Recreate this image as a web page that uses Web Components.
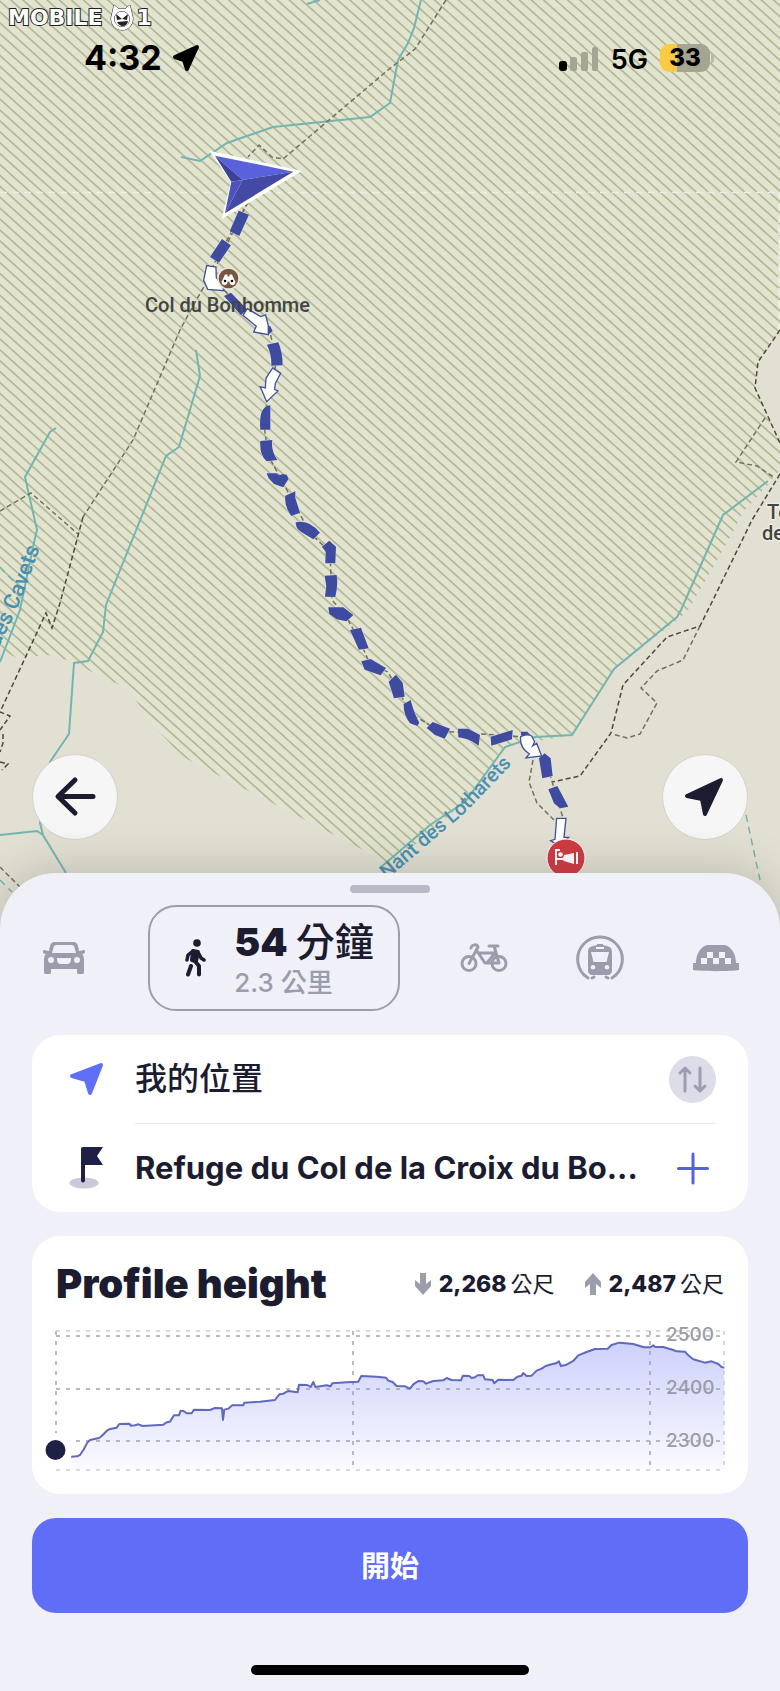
<!DOCTYPE html>
<html lang="zh-Hant">
<head>
<meta charset="utf-8">
<meta name="viewport" content="width=device-width, initial-scale=1">
<title>Route</title>
<style>
  body {
    margin: 0;
    font-family: Inter, "Noto Sans CJK TC", sans-serif;
    color: #1c1c30;
    background: #f0f0f9;
  }
</style>
</head>
<body>
<route-screen>
  <map-view slot="map"></map-view>
  <site-mark slot="mark"></site-mark>
  <status-bar slot="status" time="4:32" network="5G" battery="33"></status-bar>
  <round-button slot="controls" label="返回">
    <svg width="42" height="42" viewBox="0 0 42 42" fill="none" stroke="#1c1c30" stroke-width="5" stroke-linecap="round" stroke-linejoin="round"><path d="M21 4 4 20.500 21 37M5 20.500h34"/></svg>
  </round-button>
  <round-button slot="controls" label="定位">
    <svg width="42" height="42" viewBox="0 0 42 42" fill="#1c1c30" stroke="#1c1c30" stroke-width="4" stroke-linejoin="round"><path d="M37 4 21 38 18 23 3 20Z"/></svg>
  </round-button>

  <bottom-sheet slot="sheet">
    <mode-picker>
      <travel-mode label="開車">
        <svg width="44" height="34" viewBox="0 0 44 34" fill="currentColor"><path fill-rule="evenodd" d="M13 1h18c3 0 4 1 5 4l1 5 5-1c2 0 1 4-1 4h-1c2 2 2 4 2 7v11c0 2-1 2-2 2h-3c-2 0-2-1-2-2v-3H9v3c0 2-1 2-2 2H4c-1 0-2 0-2-2V20c0-3 0-5 2-7H3c-2 0-3-4-1-4l5 1 1-5c1-3 2-4 5-4Zm1 3-2 1-2 7h24l-2-7-2-1ZM9 16a3 3 0 1 0 0 6 3 3 0 0 0 0-6Zm26 0a3 3 0 1 0 0 6 3 3 0 0 0 0-6Zm-20 1c0 4 1 6 4 6h6c3 0 4-2 4-6Z"/></svg>
      </travel-mode>
      <travel-mode label="步行" selected>
        <svg width="22" height="38" viewBox="0 0 22 38" fill="none" stroke="currentColor" stroke-width="4" stroke-linecap="round" stroke-linejoin="round"><circle cx="13" cy="4" r="3.800" fill="currentColor" stroke="none"/><path d="m9 12-5 4-1 5M15 15l2 4 3 2" stroke-width="3.500"/><path d="m9 12 5 1-2 9-4-1Z" fill="currentColor"/><path d="m10 21 5 6 0 8.500M7 27 4 35.500"/></svg>
        <span slot="value">54</span>
        <span slot="unit">分鐘</span>
        <span slot="distance">2.3 公里</span>
      </travel-mode>
      <travel-mode label="單車">
        <svg width="48" height="30" viewBox="0 0 48 30" fill="none" stroke="currentColor" stroke-width="3" stroke-linecap="round" stroke-linejoin="round"><circle cx="9" cy="20.500" r="7"/><circle cx="39" cy="20.500" r="7"/><path d="M9 20.500 18 4c-1-3-6-3-7 1M18 10h17l-8 10h12L34 3M29 3h9M17 8l8 12h3"/></svg>
      </travel-mode>
      <travel-mode label="大眾運輸">
        <svg width="48" height="46" viewBox="0 0 48 46" fill="none" stroke="currentColor" stroke-width="3" stroke-linecap="round"><path d="M12 43a22.300 22.300 0 1 1 24 0"/><path fill="currentColor" fill-rule="evenodd" stroke="none" d="m17 11 4-1v-1h6v1l4 1c4 1 5 3 5 6v18c0 4-2 5-5 5H17c-3 0-5-1-5-5V17c0-3 1-5 5-6Zm-2 6 2 8c0 2 1 2 2 2h10c1 0 2 0 2-2l2-8Zm5-5v2h8v-2Zm-3 18a2.300 2.300 0 1 0 0 4.600 2.300 2.300 0 0 0 0-4.600Zm14 0a2.300 2.300 0 1 0 0 4.600 2.300 2.300 0 0 0 0-4.600Z"/><path d="m18 42-2 1m14-1 2 1"/></svg>
      </travel-mode>
      <travel-mode label="計程車">
        <svg width="48" height="28" viewBox="0 0 48 28" fill="currentColor"><path d="M4 19c0-8 4-16 11-18h18c7 2 11 10 11 18h3v7c-8 1.500-38 1.500-46 0v-7Z"/><path fill="#f0f0f9" d="M15 8h6v6h-6Zm12 0h6v6h-6ZM9 14h6v6H9Zm12 0h6v6h-6Zm12 0h6v6h-6Z"/></svg>
      </travel-mode>
    </mode-picker>

    <sheet-card>
      <place-row label="交換起點和終點">
        <svg slot="icon" width="36" height="36" viewBox="0 0 36 36" fill="#6070f6" stroke="#6070f6" stroke-width="4" stroke-linejoin="round"><path d="M32 4 21 32 17 19 3 15Z"/></svg>
        <span class="zh">我的位置</span>
        <svg slot="action" width="47" height="47" viewBox="0 0 47 47" fill="none" stroke="#9c9eae" stroke-width="3" stroke-linecap="round" stroke-linejoin="round"><circle cx="23.500" cy="23.500" r="23.500" fill="#dddce9" stroke="none"/><path d="M16 35V12m-5 5 5-5 5 5M31 12v23m-5-5 5 5 5-5"/></svg>
      </place-row>
      <place-row label="新增停靠點" divided>
        <svg slot="icon" width="36" height="42" viewBox="0 0 36 42"><ellipse cx="15" cy="36" rx="14.500" ry="5.500" fill="#c9c9d8"/><path fill="#1f2045" d="M12 2q0-2 2-2h20l-6 9 6 9H16v16q-2 3-4 0Z"/></svg>
        <span>Refuge du Col de la Croix du Bo...</span>
        <svg slot="action" width="47" height="47" viewBox="0 0 47 47" fill="none" stroke="#5863d3" stroke-width="3" stroke-linecap="round"><path d="M24 9v29M9.500 23.500h29"/></svg>
      </place-row>
    </sheet-card>

    <sheet-card>
      <height-profile low="2,268" high="2,487" unit="公尺">Profile height</height-profile>
    </sheet-card>

    <start-button>開始</start-button>
  </bottom-sheet>
</route-screen>

<script>
class RouteScreen extends HTMLElement {
  constructor () {
    super()
    this.shadow = this.attachShadow({ mode: 'open' })
  }

  connectedCallback () {
    this.shadow.innerHTML =
    /* html */ `
      <style>
        :host {
          display: flex;
          flex-direction: column;
          min-height: 100vh;
          overflow: hidden;
        }

        .stage {
          position: relative;
          display: flex;
          flex: 1;
          flex-direction: column;
          justify-content: space-between;
          min-height: 480px;
        }

        /* the map runs on under the rounded corners of the sheet */
        ::slotted([slot="map"]) {
          position: absolute;
          inset: 0 0 -57px;
        }

        ::slotted([slot="mark"]) {
          position: absolute;
          top: 4px;
          left: 8px;
        }

        ::slotted([slot="status"]) {
          position: relative;
        }

        .controls {
          position: relative;
          display: flex;
          justify-content: space-between;
          padding: 0 32px 33px;
        }
      </style>
      <div class="stage">
        <slot name="map"></slot>
        <slot name="mark"></slot>
        <slot name="status"></slot>
        <div class="controls"><slot name="controls"></slot></div>
      </div>
      <slot name="sheet"></slot>
    `
  }
}

class SiteMark extends HTMLElement {
  constructor () {
    super()
    this.shadow = this.attachShadow({ mode: 'open' })
  }

  connectedCallback () {
    this.shadow.innerHTML =
    /* html */ `
      <style>
        :host {
          display: flex;
          align-items: center;
          gap: 2px;
          height: 27px;
          font: bold 22px/27px "DejaVu Sans", sans-serif;
          color: #fff;
          -webkit-text-stroke: 2px #222;
          paint-order: stroke fill;
        }

        svg {
          margin-left: 4px;
        }
      </style>
      <span>MOBILE</span>
      <svg width="26" height="27" viewBox="0 0 26 27" fill="#fff" stroke="#222" stroke-linejoin="round">
        <path d="M5 1l5 4h6l5-4 2 9c3 8-2 16-10 16S0 18 3 10Z"/>
        <circle cx="13" cy="15" r="7.500"/>
        <path fill="#222" stroke="none" d="m7 10 6 5-5 1Zm12 0-6 5 5 1ZM8 18l11-1c-1 6-8 7-11 1Z"/>
      </svg>
      <span>1</span>
    `
  }
}

class StatusBar extends HTMLElement {
  constructor () {
    super()
    this.shadow = this.attachShadow({ mode: 'open' })
  }

  connectedCallback () {
    this.shadow.innerHTML =
    /* html */ `
      <style>
        :host {
          display: flex;
          justify-content: space-between;
          align-items: center;
          padding: 36px 66px 0 84px;
          color: #000;
        }

        div {
          display: flex;
          align-items: center;
        }

        .time {
          gap: 10px;
          font-size: 34px;
          font-weight: 700;
          line-height: 40px;
        }

        .radio {
          gap: 12px;
          font-size: 27px;
          font-weight: 600;
          line-height: 40px;
        }

        .network {
          padding-top: 4px;
        }

        .battery {
          justify-content: center;
          width: 50px;
          height: 28px;
          border-radius: 9px;
          background: linear-gradient(90deg, #f9cb44 34%, #a5a592 34%);
          font-size: 24px;
          font-weight: 800;
          line-height: 28px;
        }

        .cell {
          gap: 1px;
        }

        .cell::after {
          content: "";
          width: 3px;
          height: 9px;
          border-radius: 0 3px 3px 0;
          background: #b9b9a4;
        }
      </style>
      <div class="time">
        <span>${this.getAttribute('time')}</span>
        <svg width="28" height="28" viewBox="0 0 28 28" stroke="#000" stroke-width="4" stroke-linejoin="round"><path d="M25 3 15 25 12 16 3 13Z"/></svg>
      </div>
      <div class="radio">
        <svg width="40" height="25" viewBox="0 0 40 25" fill="#a5a593"><rect y="15" width="8" height="10" rx="3" fill="#000"/><rect x="11" y="11" width="7" height="14" rx="2"/><rect x="22" y="6" width="7" height="19" rx="2"/><rect x="33" y="1" width="6" height="24" rx="2"/></svg>
        <span class="network">${this.getAttribute('network')}</span>
        <div class="cell"><div class="battery">${this.getAttribute('battery')}</div></div>
      </div>
    `
  }
}

class MapView extends HTMLElement {
  constructor () {
    super()
    this.shadow = this.attachShadow({ mode: 'open' })
  }

  connectedCallback () {
    this.shadow.innerHTML =
    /* html */ `
      <style>
        :host {
          display: block;
        }

        svg {
          display: block;
          width: 100%;
          height: 100%;
          background: #e2e0d3;
        }

        text {
          font-family: Roboto, sans-serif;
          font-size: 20px;
          font-weight: 500;
          fill: #444443;
        }

        .halo {
          stroke: #ecebdf;
          stroke-width: 3px;
          paint-order: stroke;
        }

        .river-name {
          fill: #4990b0;
          text-anchor: end;
        }

        .large {
          font-size: 22px;
        }

        .water {
          fill: none;
          stroke: #74b5b0;
          stroke-width: 2;
        }

        .trail {
          fill: none;
          stroke: #75705a;
          stroke-width: 1.5;
          stroke-dasharray: 5 3;
        }

        .dark {
          stroke: #4f4937;
        }

        .route {
          fill: #3e4b9f;
          stroke: #dfe2e4;
          stroke-width: 3;
          paint-order: stroke;
        }

        .turn {
          fill: #fff;
          stroke: #41539c;
          stroke-width: 4;
        }
      </style>
      <svg viewBox="0 0 780 930" preserveAspectRatio="xMidYMax slice">
        <defs>
          <pattern id="hatch" width="40" height="8.100" patternUnits="userSpaceOnUse" patternTransform="rotate(42)">
            <rect width="40" height="8.100" fill="#e2e4d1"/>
            <rect width="40" height="1.600" fill="#b0b68c"/>
          </pattern>
          <path id="cavets" d="M-32 722 2 640 16 612 24 592 40 548"/>
          <path id="lotharets" d="M368 896 426 846 466 812 512 764"/>
        </defs>

        <path fill="url(#hatch)" d="M0 0H780V330L758 362 755 388 780 443V470L763 490 743 512 727 543 687 612 677 620 614 669 572 735 505 747 465 802 390 866 375 856 183 757 148 720 130 690 88 670 67 660 48 655 17 658 0 650Z"/>
        <path d="M0 192.500H780M779 192V330" fill="none" stroke="#eeefe4" stroke-width="1.500" stroke-dasharray="7 5"/>

        <g class="water">
          <path d="M181 157 200 161 227 143 273 127 370 117 390 103 398 60 408 43 414 28 421 0M307 4l13-4"/>
          <path d="M196 350 200 376 179 447 166 456 106 605 103 632 88 661 74 663 69 734 50 762 40 823 43 835 66 873M0 835 37 831 43 835"/>
          <path d="M56 428 50 432 25 477 37 530 33 547 20 610 0 662"/>
          <path d="M768 481 723 515 681 610 677 617 614 669 572 735 535 737 505 747 465 802 430 825 380 868"/>
          <path d="M0 567 20 588M746 815 760 880M0 880 12 892" stroke-dasharray="7 5" stroke-width="1.500"/>
        </g>

        <g class="trail">
          <path d="M446 0 415 49 388 70 283 159 272 157 259 145 248 157"/>
          <path d="M248 202 216 266 198 297 180 330 133 440 83 517"/>
          <path d="M0 511 31 493 78 534M0 867 20 887"/>
          <path d="M765 418 736 462 757 466 775 478M700 626 683 660 657 671 641 688 657 703 640 734 627 738 612 734M533 760 529 782 537 803 554 820"/>
        </g>
        <g class="trail dark">
          <path d="M83 517 60 603 52 628 46 613 0 712 10 716 0 730M3 734 3 743 0 752M0 762 8 764 2 770"/>
          <path d="M780 330 758 362 755 388 780 443M780 474 752 520 712 602 700 626 667 637 623 685 611 733 580 776 552 782"/>
        </g>
        <path class="trail" d="M248 202 215 262 210 272 242 312 270 333 277 360 267 400 264 425 268 455 288 492 310 533 330 552 332 600 345 615 359 639 370 664 388 672 398 690 411 714 440 731 525 737 548 768 563 818"/>

        <!-- walked line, drawn as separate dashes -->
        <g transform="scale(.3333)">
          <path class="route" d="m716 632 31 12-29 64-29-14ZM666 717l27 19-36 52-27-17ZM672 888l21-10 48 50-18 18ZM790 985l20-8 8 16-14 12Z"/>
          <path class="turn" d="m620 797 28 4 1 32 12 16 12 23-50-4-12-27ZM742 926l40 24 15-5 8 32 0 27-44-8 8-17-40-33Z"/>
        </g>
        <g transform="translate(0 330) scale(.3333)">
          <path class="route" d="m801 44 34-7q13 30 13 69l-34 1q2-30-13-63ZM781 299q-6-70 30-73v73ZM781 333l36-3q-5 30 15 60l-32 4q-22-20-19-61ZM800 430h30l8 6 10-4 12 2 6 12-16 26-28-10-16-17ZM856 497l30-13 0 20 14 44-26 10q-22-30-18-61ZM887 577q40-10 73 31l-20 20-35-21q-18-10-18-30ZM966 650l22-18 20 18-2 50h-30l1-35ZM974 737l36-2q5 30-4 66l-31-1 4-32Z"/>
          <path class="turn" d="m818 114 24 16-16 30-2 18 10 5-34 32-19-45 15 4 2-29Z"/>
        </g>
        <g transform="translate(0 600) scale(.3333)">
          <path class="route" d="m985 22 45 0 30 23-20 19-30-6-22-16ZM1050 90l33-7 23 62-29 4ZM1084 184l28-7 46 27-16 22-48-17Z"/>
        </g>
        <g transform="translate(390 600) scale(.3333)">
          <path class="route" d="m-4 245 22-21 20 24 6 42-32 5ZM41 312l21-12q10 40 26 68l-6 10-22-8q-20-25-19-58ZM110 384l18-18 52 20-16 30-29-11ZM204 386h31l35 19-4 32q-30-22-61-25ZM302 410l66-20-2 28-62 19ZM392 395h20l16 17-33 0ZM447 475l17-15 18 15 6 53-31 7ZM475 568l27-10 33 62-25 5-18-15Z"/>
          <path class="turn" d="M392 410q18-10 33-2l9 17-6 13 12-8 15 38-47 6 10-12q-30-20-26-52ZM500 655h28l-6 57 14 0-26 28-28-18 13-4Z"/>
        </g>

        <g transform="scale(.3333)">
          <path fill="#fff" d="M628 452 905 513 665 658 692 545Z"/>
          <path fill="#5961dc" d="M645 467 880 515 728 540Z"/>
          <path fill="#4449a5" d="M880 515 675 640 728 540Z"/>
          <path fill="#3c4199" d="M645 467 728 540 694 545Z"/>
          <path fill="#4d53bd" d="M694 545 728 540 675 640Z"/>
        </g>

        <circle cx="228.500" cy="278.500" r="10.500" fill="#775641" stroke="#e9e6d8" stroke-width="1.500"/>
        <path fill="#fff" d="M222.500 280 225 274.500h2.500v2h2v-2h2.500l2.500 5.500a3 3 0 1 1-5 1.500h-2a3 3 0 1 1-5-1.500Z"/>
        <circle cx="225" cy="281" r="1.300"/>
        <circle cx="232" cy="281" r="1.300"/>

        <g transform="translate(566 858)">
          <circle r="19" fill="#d03a42" stroke="#fff"/>
          <path fill="#fff" d="M-11-9h5v2h-3V0h6l1-3 10-2v11l-10-3-1-1h-6v5h-2ZM10-6h2v12h-2Z"/>
          <circle cx="-5.500" cy="-3.500" r="2.300" fill="#fff"/>
        </g>

        <text x="145" y="312">Col du Bonhomme</text>
        <text class="halo" x="767" y="519">Te</text>
        <text class="halo" x="762" y="540">de</text>
        <text class="river-name large"><textPath href="#cavets" startOffset="100%">au des Cavets</textPath></text>
        <text class="river-name"><textPath href="#lotharets" startOffset="100%">Nant des Lotharets</textPath></text>
      </svg>
    `
  }
}

class RoundButton extends HTMLElement {
  constructor () {
    super()
    this.shadow = this.attachShadow({ mode: 'open' })
  }

  connectedCallback () {
    this.shadow.innerHTML =
    /* html */ `
      <style>
        :host {
          display: block;
        }

        button {
          display: grid;
          place-items: center;
          width: 86px;
          height: 86px;
          padding: 0;
          border: 1px solid #d3d2cb;
          border-radius: 50%;
          background: #f6f6f6;
          cursor: pointer;
        }
      </style>
      <button aria-label="${this.getAttribute('label')}"><slot></slot></button>
    `
  }
}

class BottomSheet extends HTMLElement {
  constructor () {
    super()
    this.shadow = this.attachShadow({ mode: 'open' })
  }

  connectedCallback () {
    this.shadow.innerHTML =
    /* html */ `
      <style>
        :host {
          position: relative;
          display: flex;
          flex-direction: column;
          gap: 24px;
          padding: 12px 32px 16px;
          border-radius: 56px 56px 0 0;
          background: #f0f0f9;
          box-shadow: 0 0 48px rgba(60, 60, 60, .25);
        }

        .handle {
          align-self: center;
          width: 80px;
          height: 8px;
          margin-bottom: -12px;
          border-radius: 4px;
          background: #b8b8c6;
        }

        .home {
          align-self: center;
          width: 278px;
          height: 10px;
          margin-top: 28px;
          border-radius: 5px;
          background: #000;
        }
      </style>
      <div class="handle"></div>
      <slot></slot>
      <div class="home"></div>
    `
  }
}

class ModePicker extends HTMLElement {
  constructor () {
    super()
    this.shadow = this.attachShadow({ mode: 'open' })
  }

  connectedCallback () {
    this.shadow.innerHTML =
    /* html */ `
      <style>
        :host {
          display: flex;
          justify-content: space-between;
          align-items: center;
        }
      </style>
      <slot></slot>
    `
  }
}

class TravelMode extends HTMLElement {
  constructor () {
    super()
    this.shadow = this.attachShadow({ mode: 'open' })
    this.selected = this.hasAttribute('selected')
  }

  connectedCallback () {
    this.shadow.innerHTML =
    /* html */ `
      <style>
        :host {
          display: block;
        }

        button {
          display: flex;
          align-items: center;
          justify-content: center;
          width: 64px;
          height: 64px;
          padding: 0;
          border: none;
          background: none;
          font: inherit;
          color: #9b9dac;
          cursor: pointer;
        }

        button.selected {
          gap: 28px;
          width: 252px;
          height: 106px;
          padding: 0 10px 0 20px;
          border: 2px solid #9d9eaa;
          border-radius: 28px;
          color: #1c1c30;
          text-align: left;
        }

        .text {
          padding-top: 4px;
        }

        .duration {
          display: flex;
          align-items: baseline;
          gap: 8px;
          font-size: 39px;
          line-height: 46px;
        }

        ::slotted([slot="value"]) {
          font-weight: 900;
        }

        ::slotted([slot="unit"]) {
          font-weight: 500;
        }

        .distance {
          display: block;
          font-size: 26px;
          font-weight: 500;
          line-height: 36px;
          color: #9b9dac;
        }
      </style>
      <button class="${this.selected ? 'selected' : ''}" aria-label="${this.getAttribute('label')}" aria-pressed="${this.selected}">
        <slot></slot>
        ${this.selected ? `
          <span class="text">
            <span class="duration"><slot name="value"></slot><slot name="unit"></slot></span>
            <span class="distance"><slot name="distance"></slot></span>
          </span>
        ` : ''}
      </button>
    `
  }
}

class SheetCard extends HTMLElement {
  constructor () {
    super()
    this.shadow = this.attachShadow({ mode: 'open' })
  }

  connectedCallback () {
    this.shadow.innerHTML =
    /* html */ `
      <style>
        :host {
          display: block;
          border-radius: 28px;
          background: #fff;
        }
      </style>
      <slot></slot>
    `
  }
}

class PlaceRow extends HTMLElement {
  constructor () {
    super()
    this.shadow = this.attachShadow({ mode: 'open' })
  }

  connectedCallback () {
    this.shadow.innerHTML =
    /* html */ `
      <style>
        :host {
          display: flex;
          gap: 30px;
          padding: 0 32px 0 37px;
        }

        .icon {
          display: flex;
          align-items: center;
          width: 36px;
        }

        .body {
          display: flex;
          flex: 1;
          align-items: center;
          justify-content: space-between;
          min-width: 0;
          height: 88px;
        }

        :host([divided]) .body {
          border-top: 1px solid #e8e8ee;
        }

        .name {
          flex: 1;
          min-width: 0;
          overflow: hidden;
          font-size: 31px;
          font-weight: 700;
          line-height: 44px;
          text-overflow: ellipsis;
          white-space: nowrap;
        }

        ::slotted(.zh) {
          font-size: 32px;
          font-weight: 500;
        }

        button {
          display: block;
          padding: 0;
          border: none;
          background: none;
          line-height: 0;
          cursor: pointer;
        }
      </style>
      <div class="icon"><slot name="icon"></slot></div>
      <div class="body">
        <div class="name"><slot></slot></div>
        <button aria-label="${this.getAttribute('label')}"><slot name="action"></slot></button>
      </div>
    `
  }
}

class HeightProfile extends HTMLElement {
  constructor () {
    super()
    this.shadow = this.attachShadow({ mode: 'open' })

    this.line = `213 680 232 679 240 675 250 660 262 638 270 630 297 624 305 618 320 603 330 597 350 593 358 582 388 581
      392 587 405 586 415 583 428 588 490 584 500 577 510 575 522 556 537 556 542 542 552 544 560 550 575 550 582 539
      630 540 645 534 666 535 669 570 673 539 685 536 697 526 730 526 733 518 780 515 825 510 838 493 850 491 865 483
      893 487 897 464 922 465 932 471 940 456 946 471 980 466 992 469 997 460 1040 457 1075 455 1084 438 1130 440
      1158 443 1165 452 1178 456 1190 468 1215 469 1230 476 1240 463 1255 453 1270 454 1278 461 1300 453 1330 451
      1340 444 1355 450 1383 451 1389 437 1408 438 1415 444 1425 442 1433 436 1450 436 1455 448 1478 450 1483 460
      1495 449 1540 450 1552 440 1565 437 1570 429 1580 438 1595 437 1610 422 1625 416 1637 408 1655 403 1668 400
      1677 394 1683 408 1700 404 1720 393 1735 376 1760 366 1785 357 1823 356 1835 345 1858 338 1900 342 1932 352
      1952 352 1960 346 1966 351 1990 351 2020 360 2030 364 2055 365 2065 376 2080 388 2115 398 2135 394 2155 402
      2165 411 2173 413`
  }

  connectedCallback () {
    const unit = this.getAttribute('unit')

    this.shadow.innerHTML =
    /* html */ `
      <style>
        :host {
          display: block;
          padding: 24px 24px 22px;
        }

        header {
          display: flex;
          align-items: center;
          justify-content: space-between;
          margin-bottom: 20px;
        }

        h2 {
          margin: 0;
          font-size: 40px;
          font-weight: 900;
          line-height: 48px;
        }

        .stats {
          display: flex;
          gap: 30px;
          font-size: 22px;
          line-height: 32px;
        }

        .stat {
          display: flex;
          align-items: center;
          gap: 4px;
        }

        .stat svg {
          margin-right: 4px;
        }

        b {
          font-size: 23px;
          font-weight: 800;
        }

        .chart {
          display: block;
          width: 100%;
          overflow: visible;
        }

        .grid {
          fill: none;
          stroke: #a3a3ad;
          stroke-width: 1.5;
          stroke-dasharray: 4 6;
        }

        .edge {
          stroke: #cbcbd2;
        }

        text {
          font-size: 19px;
          font-weight: 500;
          fill: #9a9ba6;
        }
      </style>
      <header>
        <h2><slot></slot></h2>
        <div class="stats">
          <span class="stat">
            <svg width="16" height="22" viewBox="0 0 16 22" fill="#9b9dac"><path d="M5 0h6v11l5-4v6l-8 9-8-9V7l5 4Z"/></svg>
            <b>${this.getAttribute('low')}</b><span>${unit}</span>
          </span>
          <span class="stat">
            <svg width="16" height="22" viewBox="0 0 16 22" fill="#9b9dac"><path d="M5 22h6V11l5 4V9L8 0 0 9v6l5-4Z"/></svg>
            <b>${this.getAttribute('high')}</b><span>${unit}</span>
          </span>
        </div>
      </header>
      <svg class="chart" viewBox="0 0 668 144">
        <defs>
          <linearGradient id="fill" x2="0" y2="1">
            <stop stop-color="#cdd1fb"/>
            <stop offset="1" stop-color="#fafaff"/>
          </linearGradient>
        </defs>
        <g transform="translate(-56 -98) scale(.3333)">
          <path fill="url(#fill)" d="M${this.line}V720H213Z"/>
        </g>
        <path class="grid edge" d="M0 3H668M0 142H668M668 3V142"/>
        <path class="grid" d="M0 8H668M0 61H668M0 113H668M0 3V113M297 3V142M594 3V142"/>
        <g transform="translate(-56 -98) scale(.3333)">
          <path fill="none" stroke="#5f68bd" stroke-width="6" stroke-linejoin="round" d="M${this.line}"/>
        </g>
        <circle cx="-0.500" cy="122" r="17" fill="#fff"/>
        <circle cx="-0.500" cy="122" r="10" fill="#1f2045"/>
        <text x="610" y="13">2500</text>
        <text x="610" y="66">2400</text>
        <text x="610" y="119">2300</text>
      </svg>
    `
  }
}

class StartButton extends HTMLElement {
  constructor () {
    super()
    this.shadow = this.attachShadow({ mode: 'open' })
  }

  connectedCallback () {
    this.shadow.innerHTML =
    /* html */ `
      <style>
        :host {
          display: block;
        }

        button {
          display: block;
          width: 100%;
          height: 95px;
          padding: 0 0 4px;
          border: none;
          border-radius: 24px;
          background: #606df6;
          color: #fff;
          font: inherit;
          font-size: 29px;
          font-weight: 700;
          cursor: pointer;
        }
      </style>
      <button><slot></slot></button>
    `
  }
}

customElements.define('route-screen', RouteScreen)
customElements.define('site-mark', SiteMark)
customElements.define('status-bar', StatusBar)
customElements.define('map-view', MapView)
customElements.define('round-button', RoundButton)
customElements.define('bottom-sheet', BottomSheet)
customElements.define('mode-picker', ModePicker)
customElements.define('travel-mode', TravelMode)
customElements.define('sheet-card', SheetCard)
customElements.define('place-row', PlaceRow)
customElements.define('height-profile', HeightProfile)
customElements.define('start-button', StartButton)
</script>
</body>
</html>
